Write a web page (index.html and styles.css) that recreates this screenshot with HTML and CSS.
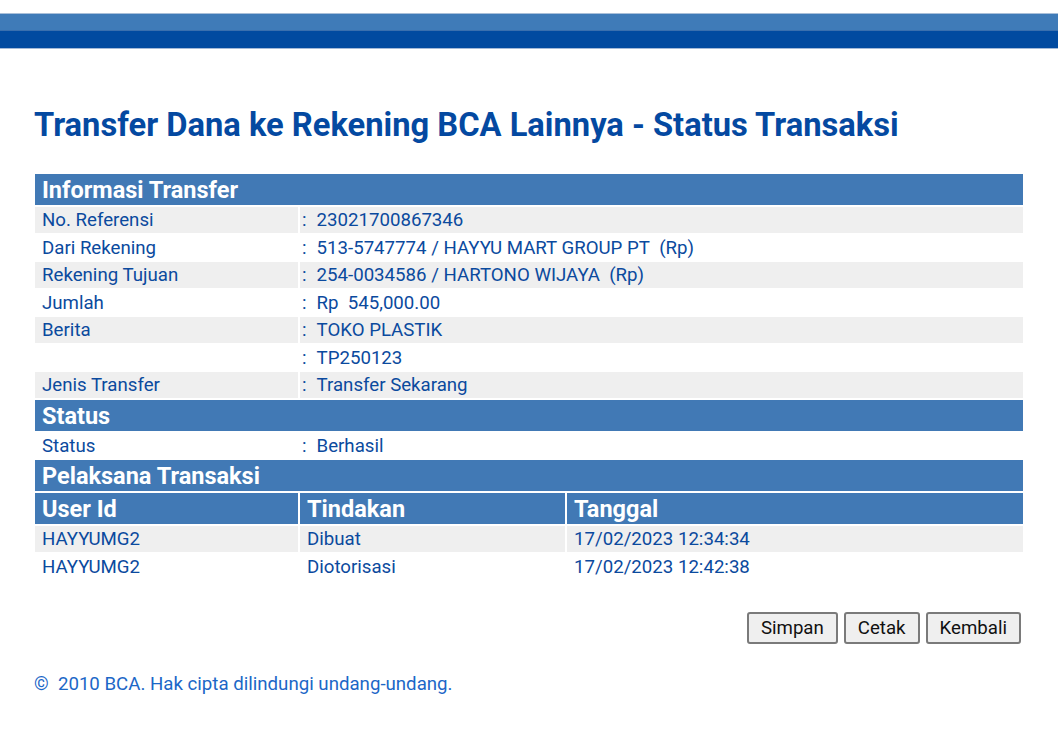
FILE: index.html
```html
<!DOCTYPE html>
<html lang="id">
<head>
  <meta charset="UTF-8" />
  <title>Transfer Dana - Status Transaksi</title>
  <link rel="stylesheet" href="styles.css">
</head>
<body>

<div class="topbar">
  <div class="band-light"></div>
  <div class="band-dark"></div>
</div>

<div class="content">
  <h1 class="title">Transfer Dana ke Rekening BCA Lainnya - Status Transaksi</h1>

  <table class="info">
    <colgroup>
      <col class="c1">
      <col class="c2">
      <col class="c3">
    </colgroup>
    <tr><th colspan="3" class="section">Informasi Transfer</th></tr>
    <tr class="odd"><td>No. Referensi</td><td colspan="2" class="val"><span class="colon">:</span>23021700867346</td></tr>
    <tr class="even"><td>Dari Rekening</td><td colspan="2" class="val"><span class="colon">:</span>513-5747774 / HAYYU MART GROUP PT&nbsp; (Rp)</td></tr>
    <tr class="odd"><td>Rekening Tujuan</td><td colspan="2" class="val"><span class="colon">:</span>254-0034586 / HARTONO WIJAYA&nbsp; (Rp)</td></tr>
    <tr class="even"><td>Jumlah</td><td colspan="2" class="val"><span class="colon">:</span>Rp&nbsp; 545,000.00</td></tr>
    <tr class="odd"><td>Berita</td><td colspan="2" class="val"><span class="colon">:</span>TOKO PLASTIK</td></tr>
    <tr class="even"><td></td><td colspan="2" class="val"><span class="colon">:</span>TP250123</td></tr>
    <tr class="odd"><td>Jenis Transfer</td><td colspan="2" class="val"><span class="colon">:</span>Transfer Sekarang</td></tr>

    <tr><th colspan="3" class="section">Status</th></tr>
    <tr class="even"><td>Status</td><td colspan="2" class="val"><span class="colon">:</span>Berhasil</td></tr>

    <tr><th colspan="3" class="section">Pelaksana Transaksi</th></tr>
    <tr><th class="section">User Id</th><th class="section">Tindakan</th><th class="section">Tanggal</th></tr>
    <tr class="odd"><td>HAYYUMG2</td><td>Dibuat</td><td>17/02/2023 12:34:34</td></tr>
    <tr class="even"><td>HAYYUMG2</td><td>Diotorisasi</td><td>17/02/2023 12:42:38</td></tr>
  </table>

  <div class="actions">
    <button class="btn">Simpan</button>
    <button class="btn">Cetak</button>
    <button class="btn">Kembali</button>
  </div>

  <p class="copyright">&copy;&nbsp; 2010 BCA. Hak cipta dilindungi undang-undang.</p>
</div>

</body>
</html>
```

FILE: styles.css
```css
body {
  margin: 0;
  font-family: Roboto, "Liberation Sans", Arial, sans-serif;
  font-size: 18.67px;
  background: #fff;
  color: #0b4a9e;
}
.topbar {
  margin-top: 13px;
  border-top: 1px solid #a9bfd9;
  border-bottom: 1px solid #a3b9d8;
}
.band-light {
  height: 16px;
  background: #3f7bb8;
  border-bottom: 1px solid #3a6fae;
}
.band-dark {
  height: 17px;
  background: #014aa0;
}
.content {
  padding: 0 35px;
}
.title {
  margin: 57px 0 28px -1px;
  font-size: 32.7px;
  font-weight: bold;
  color: #0449a1;
  line-height: 38px;
}
.info {
  border-collapse: separate;
  border-spacing: 2px;
  margin: 0 -2px;
  width: calc(100% + 4px);
  table-layout: fixed;
}
.info th,
.info td {
  box-sizing: border-box;
}
.c1 { width: 263px; }
.c2 { width: 265px; }
.section {
  background: #4179b5;
  color: #fff;
  text-align: left;
  font-size: 23.5px;
  font-weight: bold;
  padding: 1px 7px 0;
  height: 31px;
  line-height: 30px;
}
.info td {
  padding: 2px 7px 0;
  height: 25.5px;
  line-height: 23.5px;
  white-space: nowrap;
}
.info td.val {
  padding-left: 2px;
}
.odd td { background: #efefef; }
.even td { background: #fff; }
.colon {
  margin-right: 10px;
}
.actions {
  display: flex;
  justify-content: flex-end;
  gap: 6px;
  margin-top: 31px;
  padding-right: 2px;
}
.btn {
  font-family: Roboto, "Liberation Sans", Arial, sans-serif;
  font-size: 18.67px;
  color: #111;
  background: #efefef;
  border: 2px solid #7a7a7a;
  border-radius: 3px;
  height: 32px;
  padding: 0 12px;
}
.copyright {
  margin: 29px 0 0 -1px;
  color: #1c67c7;
}
```
